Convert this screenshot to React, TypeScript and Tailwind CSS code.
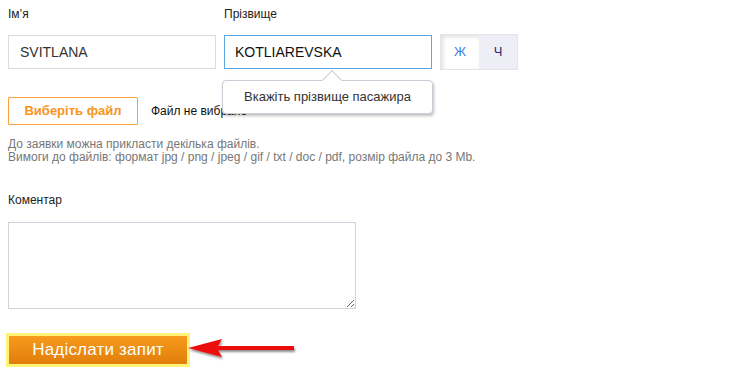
import React, { useState } from "react";

const font = { fontFamily: '"Liberation Sans", Arial, sans-serif' };

const App: React.FC = () => {
  const [gender, setGender] = useState<"f" | "m">("f");

  return (
    <main
      className="w-[750px] h-[372px] bg-white overflow-hidden relative pl-2 pt-[7px] text-[#222]"
      style={font}
    >
      {/* name row */}
      <div className="flex items-end gap-2">
        <div className="flex flex-col w-[208px]">
          <label className="text-[12px] h-[14px] leading-[14px] mb-[14px]">Ім’я</label>
          <input
            className="h-[34px] border border-[#d9dde3] px-[11px] text-[14px] uppercase text-[#333] outline-none"
            defaultValue="SVITLANA"
          />
        </div>
        <div className="flex flex-col w-[208px] relative">
          <label className="text-[12px] h-[14px] leading-[14px] mb-[14px]">Прізвище</label>
          <input
            className="h-[34px] border border-[#5aa7e6] px-[10px] text-[14px] uppercase text-[#111] outline-none"
            defaultValue="KOTLIAREVSKA"
          />
          {/* tooltip */}
          <div className="absolute left-[-2px] top-[73px] w-[211px] h-[34px] z-10">
            <div className="absolute left-[103px] top-[-7px] w-[14px] h-[14px] bg-white border-l border-t border-[#c9ced8] rotate-45" />
            <div className="w-full h-full bg-white border border-[#c9ced8] rounded-[4px] shadow-[1px_2px_3px_rgba(0,0,0,0.25)] flex items-center justify-center text-[13px] text-[#333]">
              Вкажіть прізвище пасажира
            </div>
          </div>
        </div>
        <div className="flex h-[36px] mb-[-1px] border border-[#e4e5ea]">
          <button
            onClick={() => setGender("f")}
            className={
              gender === "f"
                ? "w-[38px] bg-white shadow-[inset_2px_2px_4px_rgba(0,0,0,0.12)] text-[13px] text-[#3b82e0]"
                : "w-[38px] bg-[#eeeff6] text-[13px] text-[#2a2d6e]"
            }
          >
            Ж
          </button>
          <button
            onClick={() => setGender("m")}
            className={
              gender === "m"
                ? "w-[38px] bg-white shadow-[inset_2px_2px_4px_rgba(0,0,0,0.12)] text-[13px] text-[#3b82e0]"
                : "w-[38px] bg-[#eeeff6] text-[13px] text-[#2a2d6e]"
            }
          >
            Ч
          </button>
        </div>
      </div>

      {/* file row */}
      <div className="flex items-center mt-[28px] gap-[13px]">
        <button className="w-[130px] h-[28px] border border-[#f7a23b] text-[#f7941d] font-bold text-[13px] rounded-[1px]">
          Виберіть файл
        </button>
        <span className="text-[12px] text-[#111]">Файл не вибрано</span>
      </div>

      <p className="mt-[13px] text-[12px] leading-[13px] text-[#777]">
        До заявки можна прикласти декілька файлів.
        <br />
        Вимоги до файлів: формат jpg / png / jpeg / gif / txt / doc / pdf, розмір файла до 3 Mb.
      </p>

      <label className="block mt-[29px] text-[12px] leading-[14px] text-[#222]">Коментар</label>
      <textarea className="block mt-[15px] w-[348px] h-[87px] border border-[#cfd3dd] outline-none resize" />

      {/* submit */}
      <div className="flex items-center mt-[24px] ml-[-2px]">
        <button className="w-[184px] h-[34px] border-[3px] border-[#fff37a] bg-gradient-to-b from-[#f89b1c] to-[#e07e0a] text-white text-[17px] tracking-[0.2px]">
          Надіслати запит
        </button>
        <svg width="112" height="24" viewBox="0 0 112 24" className="ml-[-4px]">
          <defs>
            <filter id="sh" x="-10%" y="-50%" width="130%" height="200%">
              <feDropShadow dx="1" dy="2" stdDeviation="1.2" floodColor="#000" floodOpacity="0.45" />
            </filter>
          </defs>
          <g filter="url(#sh)">
            <path d="M2 10 L36 1 L32 8 L108 8 L108 12 L32 12 L36 19 Z" fill="#ee1111" />
          </g>
        </svg>
      </div>
    </main>
  );
};

export default App;
